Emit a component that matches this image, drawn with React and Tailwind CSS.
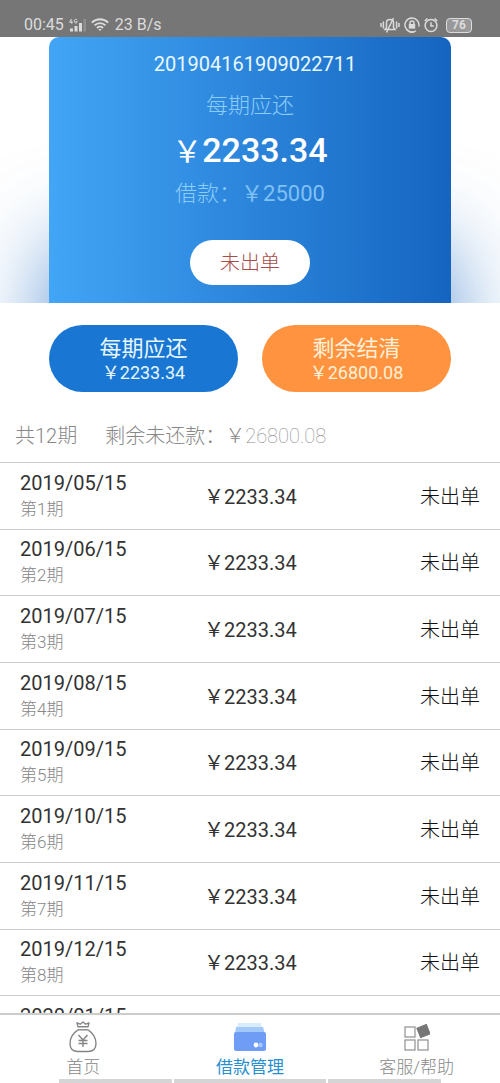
import { clsx } from "clsx"

const bills = [
    { date: "2019/05/15", period: 1 },
    { date: "2019/06/15", period: 2 },
    { date: "2019/07/15", period: 3 },
    { date: "2019/08/15", period: 4 },
    { date: "2019/09/15", period: 5 },
    { date: "2019/10/15", period: 6 },
    { date: "2019/11/15", period: 7 },
    { date: "2019/12/15", period: 8 },
    { date: "2020/01/15", period: 9 }
]

const SignalIcon = () => (
    <svg width="19" height="15" viewBox="0 0 19 15" fill="#dcdcdc" aria-hidden="true">
        <path d="M3.600 1 L1.500 4.200 H4.600 M3.800 2.600 V5.800" fill="none" stroke="#dcdcdc" />
        <path d="M9.200 2 C8.400 .8 6.300 1 6.300 3.200 C6.300 5.600 9.200 5.600 9.200 3.600 H7.800" fill="none" stroke="#dcdcdc" />
        <rect x="2" y="10.500" width="3" height="3" />
        <rect x="6.500" y="8" width="3" height="5.500" />
        <rect x="11" y="5" width="3" height="8.500" />
        <rect x="15.500" y="1" width="2.500" height="12.500" fill="#8f8f8f" />
    </svg>
)

const WifiIcon = () => (
    <svg width="18" height="14" viewBox="0 0 18 14" fill="none" stroke="#dcdcdc" strokeWidth="1.900" aria-hidden="true">
        <path d="M.8 4.6 C5.4 .2 12.600 .2 17.200 4.600" />
        <path d="M3.500 7.400 C6.600 4.400 11.400 4.400 14.500 7.400" />
        <path d="M6 10 C7.700 8.400 10.300 8.400 12 10" />
        <path d="M7.300 11 H10.700 L9 13 Z" fill="#dcdcdc" stroke="none" />
    </svg>
)

const MuteIcon = () => (
    <svg width="20" height="16" viewBox="0 0 20 16" fill="none" stroke="#dcdcdc" strokeWidth="1.500" aria-hidden="true">
        <path d="M1 6 V10 M3.400 4.500 V11.500 M16.600 4.500 V11.500 M19 6 V10" />
        <path d="M5 12.500 L6.500 10.500 V5.500 C6.500 1.500 13.500 1.500 13.500 5.500 V10.500 L15 12.500 Z" />
        <path d="M13.500 1 L6.500 15.500" />
    </svg>
)

const LockIcon = () => (
    <svg width="16" height="16" viewBox="0 0 16 16" fill="none" stroke="#dcdcdc" strokeWidth="1.400" aria-hidden="true">
        <path d="M14.800 9.500 A7 7 0 1 0 12 13.700" />
        <path d="M4.500 14.300 C7 15.500 9 15.300 10.500 14.700" />
        <rect x="4.800" y="7" width="6.400" height="4.600" fill="#dcdcdc" stroke="none" />
        <path d="M6 7.500 V6 A2 2 0 0 1 10 6 V7.500" />
    </svg>
)

const AlarmIcon = () => (
    <svg width="14" height="16" viewBox="0 0 14 16" fill="none" stroke="#dcdcdc" strokeWidth="1.500" aria-hidden="true">
        <circle cx="7" cy="8.500" r="5.900" />
        <path d="M7 5.200 V9 H9.800 M.7 4 L3.500 1.500 M13.300 4 L10.500 1.500" />
    </svg>
)

const BagIcon = () => (
    <svg width="28" height="32" viewBox="0 0 28 32" fill="none" stroke="#858585" strokeWidth="1.400" strokeLinejoin="round" aria-hidden="true">
        <path d="M9 5.800 L8 1.800 L11.200 3.200 L14 1 L16.800 3.200 L20 1.800 L19 5.800 Z" />
        <path d="M9 8.800 H19" />
        <path d="M9 8.800 C4 12 1 17.500 1 22.500 C1 28 4 30.500 9 30.500 H19 C24 30.500 27 28 27 22.500 C27 17.500 24 12 19 8.800" />
        <path d="M9.500 14 L14 19 L18.500 14 M14 19 V26 M9.500 19.500 H18.500 M9.500 22.500 H18.500" />
    </svg>
)

const WalletIcon = () => (
    <svg width="32" height="28" viewBox="0 0 32 28" aria-hidden="true">
        <path d="M4 0 H27 L28 5 H3 Z" fill="#d9ecfb" />
        <path d="M2 4 H29 L31 11 H1 Z" fill="#a3c8fa" />
        <rect y="9" width="32" height="19" rx="2" fill="#6f9df5" />
        <circle cx="26.500" cy="22" r="2.200" fill="#a9c8fa" />
        <circle cx="22" cy="22" r="2.400" fill="#fff" />
    </svg>
)

const BlocksIcon = () => (
    <svg width="26" height="28" viewBox="0 0 26 28" fill="none" stroke="#8f8f8f" strokeWidth="1.200" aria-hidden="true">
        <rect x="1" y="4" width="10" height="10" />
        <rect x="1" y="17" width="10" height="10" />
        <rect x="14" y="17" width="10" height="10" />
        <rect x="14.500" y="3" width="10" height="10" fill="#777" stroke="#777" transform="rotate(-22 19.500 8)" />
    </svg>
)

const tabs = [
    { label: "首页", Icon: BagIcon },
    { label: "借款管理", Icon: WalletIcon, active: true },
    { label: "客服/帮助", Icon: BlocksIcon }
]

const StatusBar = () => (
    <div className="flex h-[37px] shrink-0 items-end justify-between bg-[#767676] pr-7 pb-0.5 pl-6 text-base leading-5 text-[#dcdcdc]">
        <div className="flex h-5 items-center gap-1">
            <span>00:45</span>
            <SignalIcon />
            <WifiIcon />
            <span className="ml-0.5">23 B/s</span>
        </div>
        <div className="flex h-5 items-center gap-1">
            <MuteIcon />
            <LockIcon />
            <AlarmIcon />
            <span className="ml-1 h-[15px] w-[26px] rounded border border-[#dcdcdc] bg-[#999] text-center text-xs leading-[13px] font-bold">76</span>
        </div>
    </div>
)

const LoanCard = () => (
    <section className="shrink-0 overflow-hidden px-[49px]">
        <div className="flex h-[266px] flex-col items-center rounded-t-[10px] bg-linear-to-r from-[#42a5f5] to-[#1565c0] pt-[11px] text-[22px] leading-8 text-[#7fc0f5] shadow-[0_210px_90px_0_#1565c0b3]">
            <p className="pl-2.5 text-xl leading-8 text-[#e8f8ff]">201904161909022711</p>
            <p className="mt-2.5 font-light text-[#8accfa]">每期应还</p>
            <p className="mt-3 text-[34px] leading-8 font-medium text-white">
                <span className="text-3xl leading-8 font-normal">￥</span>2233.34
            </p>
            <p className="mt-2.5"><span className="font-light text-[#8accfa]">借款：</span>￥25000</p>
            <button className="mt-[30px] h-[45px] w-[120px] shrink-0 rounded-full bg-white text-xl font-light text-[#a84c48]">未出单</button>
        </div>
    </section>
)

const PayButton = ({ label, amount, className }) => (
    <button className={clsx("flex h-[67px] flex-1 flex-col items-center justify-center rounded-full pt-1 text-[22px] leading-6", className)}>
        <span>{label}</span>
        <span className="text-lg leading-6">{amount}</span>
    </button>
)

const App = () => {
    return (
        <div className="flex h-screen flex-col bg-white font-['Roboto','Noto_Sans_CJK_SC',sans-serif] text-[#333]">
            <StatusBar />
            <LoanCard />
            <div className="flex shrink-0 gap-6 px-[49px] pt-[22px]">
                <PayButton label="每期应还" amount="￥2233.34" className="bg-[#1976d2] text-[#e6f6ff]" />
                <PayButton label="剩余结清" amount="￥26800.08" className="bg-[#ff933f] text-[#fff0d8]" />
            </div>
            <div className="flex h-[71px] shrink-0 items-center gap-7 border-b border-[#ccc] px-[15px] pt-[18px] text-xl font-light text-[#888]">
                <span>共12期</span>
                <span>剩余未还款：￥<span className="font-thin">26800.08</span></span>
            </div>
            <main className="min-h-0 flex-1 overflow-hidden">
                <table className="h-[600px] w-full text-xl leading-7">
                    <tbody>
                        {bills.map(({ date, period }) => (
                            <tr key={period} className="border-b border-[#ccc]">
                                <td className="w-2/5 pb-0.5 pl-5">
                                    <p className="leading-7">{date}</p>
                                    <p className="text-[17px] leading-6 font-light text-[#888]">第{period}期</p>
                                </td>
                                <td className="pt-0.5 pl-1">￥2233.34</td>
                                <td className="pt-0.5 pr-5 text-right font-light text-[#111]">未出单</td>
                            </tr>
                        ))}
                    </tbody>
                </table>
            </main>
            <nav className="shrink-0 border-t-2 border-[#ccc] bg-white">
                <div className="grid grid-cols-3">
                    {tabs.map(({ label, Icon, active }) => (
                        <a
                            key={label}
                            href="#"
                            className={clsx("flex flex-col items-center pt-1 text-[17px] leading-6", active ? "text-[#2a8fd0]" : "font-light text-[#888]")}
                        >
                            <span className="flex h-9 items-center"><Icon /></span>
                            {label}
                        </a>
                    ))}
                </div>
                <div className="flex h-1 gap-0.5 px-[59px]">
                    <div className="flex-3 bg-[#d5d5d5]" />
                    <div className="flex-4 bg-[#d5d5d5]" />
                    <div className="flex-3 bg-[#d5d5d5]" />
                </div>
            </nav>
        </div>
    )
}

export default App
